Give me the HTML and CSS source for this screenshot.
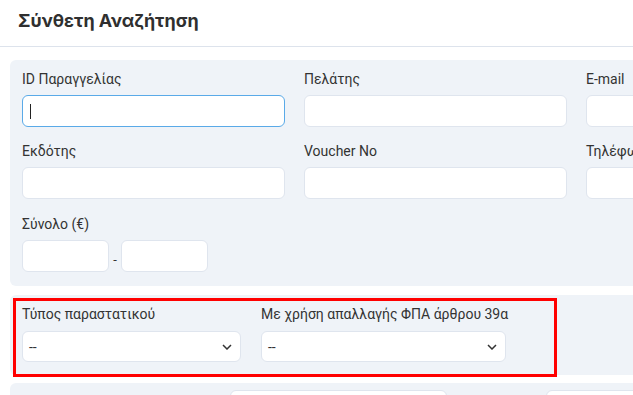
FILE: index.html
```html
<!DOCTYPE html>
<html lang="el">
<head>
  <meta charset="UTF-8">
  <meta name="viewport" content="width=device-width, initial-scale=1.0">
  <title>Σύνθετη Αναζήτηση</title>
  <link rel="stylesheet" href="styles.css">
</head>
<body>
  <header class="page-head">
    <h1>Σύνθετη Αναζήτηση</h1>
  </header>

  <!-- Βασικά πεδία -->
  <section class="panel">
    <div class="grid">
      <div class="field">
        <label>ID Παραγγελίας</label>
        <div class="input-wrap">
          <input type="text" class="focused">
          <span class="caret"></span>
        </div>
      </div>
      <div class="field">
        <label>Πελάτης</label>
        <input type="text">
      </div>
      <div class="field">
        <label>E-mail</label>
        <input type="text">
      </div>
      <div class="field">
        <label>Εκδότης</label>
        <input type="text">
      </div>
      <div class="field">
        <label>Voucher No</label>
        <input type="text">
      </div>
      <div class="field">
        <label>Τηλέφωνο</label>
        <input type="text">
      </div>
      <div class="field row-last">
        <label>Σύνολο (€)</label>
        <div class="range">
          <input type="text" class="small">
          <span class="dash">-</span>
          <input type="text" class="small">
        </div>
      </div>
    </div>
  </section>

  <!-- Παραστατικό -->
  <section class="panel panel-tight">
    <div class="highlight">
      <div class="field">
        <label>Τύπος παραστατικού</label>
        <div class="select w-219">
          <span>--</span>
          <svg width="10" height="6" viewBox="0 0 10 6"><path d="M1 1l4 4 4-4" fill="none" stroke="#333" stroke-width="1.5"/></svg>
        </div>
      </div>
      <div class="field">
        <label>Με χρήση απαλλαγής ΦΠΑ άρθρου 39α</label>
        <div class="select w-245">
          <span>--</span>
          <svg width="10" height="6" viewBox="0 0 10 6"><path d="M1 1l4 4 4-4" fill="none" stroke="#333" stroke-width="1.5"/></svg>
        </div>
      </div>
    </div>
  </section>

  <section class="panel panel-next">
    <div class="next-row">
      <label>Ημερομηνία</label>
      <input type="text" class="mid">
      <input type="text" class="mid">
    </div>
  </section>
</body>
</html>
```

FILE: styles.css
```css
* { box-sizing: border-box; }

html, body {
  overflow: hidden;
}

body {
  margin: 0;
  width: 900px;
  font-family: Roboto, "Noto Sans", sans-serif;
  color: #333;
  background: #fff;
}

.page-head {
  border-bottom: 1px solid #dde3ec;
  padding: 10px 18px 0;
  height: 47px;
}

.page-head h1 {
  margin: 0;
  font-family: Inter, Roboto, sans-serif;
  font-size: 18px;
  font-weight: 700;
  color: #2f2f2f;
}

.panel {
  margin: 13px 0 0 10px;
  background: #eff3f8;
  border-radius: 6px;
  padding: 11px 12px 14px;
}

.grid {
  display: grid;
  grid-template-columns: repeat(3, 263px);
  column-gap: 19px;
  row-gap: 16px;
}

.row-last {
  margin-top: 1px;
}

.field label {
  display: block;
  font-size: 14px;
  line-height: 17px;
  margin-bottom: 7px;
  color: #333;
}

.input-wrap {
  position: relative;
}

.caret {
  position: absolute;
  left: 8px;
  top: 9px;
  width: 1px;
  height: 15px;
  background: #222;
}

input {
  display: block;
  width: 100%;
  height: 32px;
  border: 1px solid #dfe5ee;
  border-radius: 6px;
  background: #fff;
  font: inherit;
  padding: 0 8px;
  outline: none;
}

input.focused,
input:focus {
  border-color: #5aaae8;
}

.range {
  display: flex;
  align-items: center;
}

input.small {
  width: 87px;
}

.dash {
  width: 12px;
  text-align: center;
  font-size: 13px;
  padding-top: 6px;
}

.panel-tight {
  margin-top: 9px;
  padding: 3px 3px 0;
  height: 80px;
}

.highlight {
  width: 544px;
  border: 3px solid #f00;
  padding: 5px 6px 12px;
  display: flex;
  gap: 20px;
}

.highlight .field label {
  margin-bottom: 8px;
}

.select {
  height: 31px;
  border: 1px solid #dfe5ee;
  border-radius: 6px;
  background: #fff;
  display: flex;
  align-items: center;
  justify-content: space-between;
  padding: 0 8px 0 6px;
  font-size: 14px;
}

.w-219 { width: 219px; }
.w-245 { width: 245px; }

.panel-next {
  margin-top: 8px;
  padding: 7px 12px 20px;
}

.next-row {
  display: flex;
  align-items: center;
  gap: 20px;
}

.next-row label {
  width: 188px;
  font-size: 14px;
  padding-left: 14px;
}

input.mid {
  width: 217px;
  margin-right: 79px;
}
```
